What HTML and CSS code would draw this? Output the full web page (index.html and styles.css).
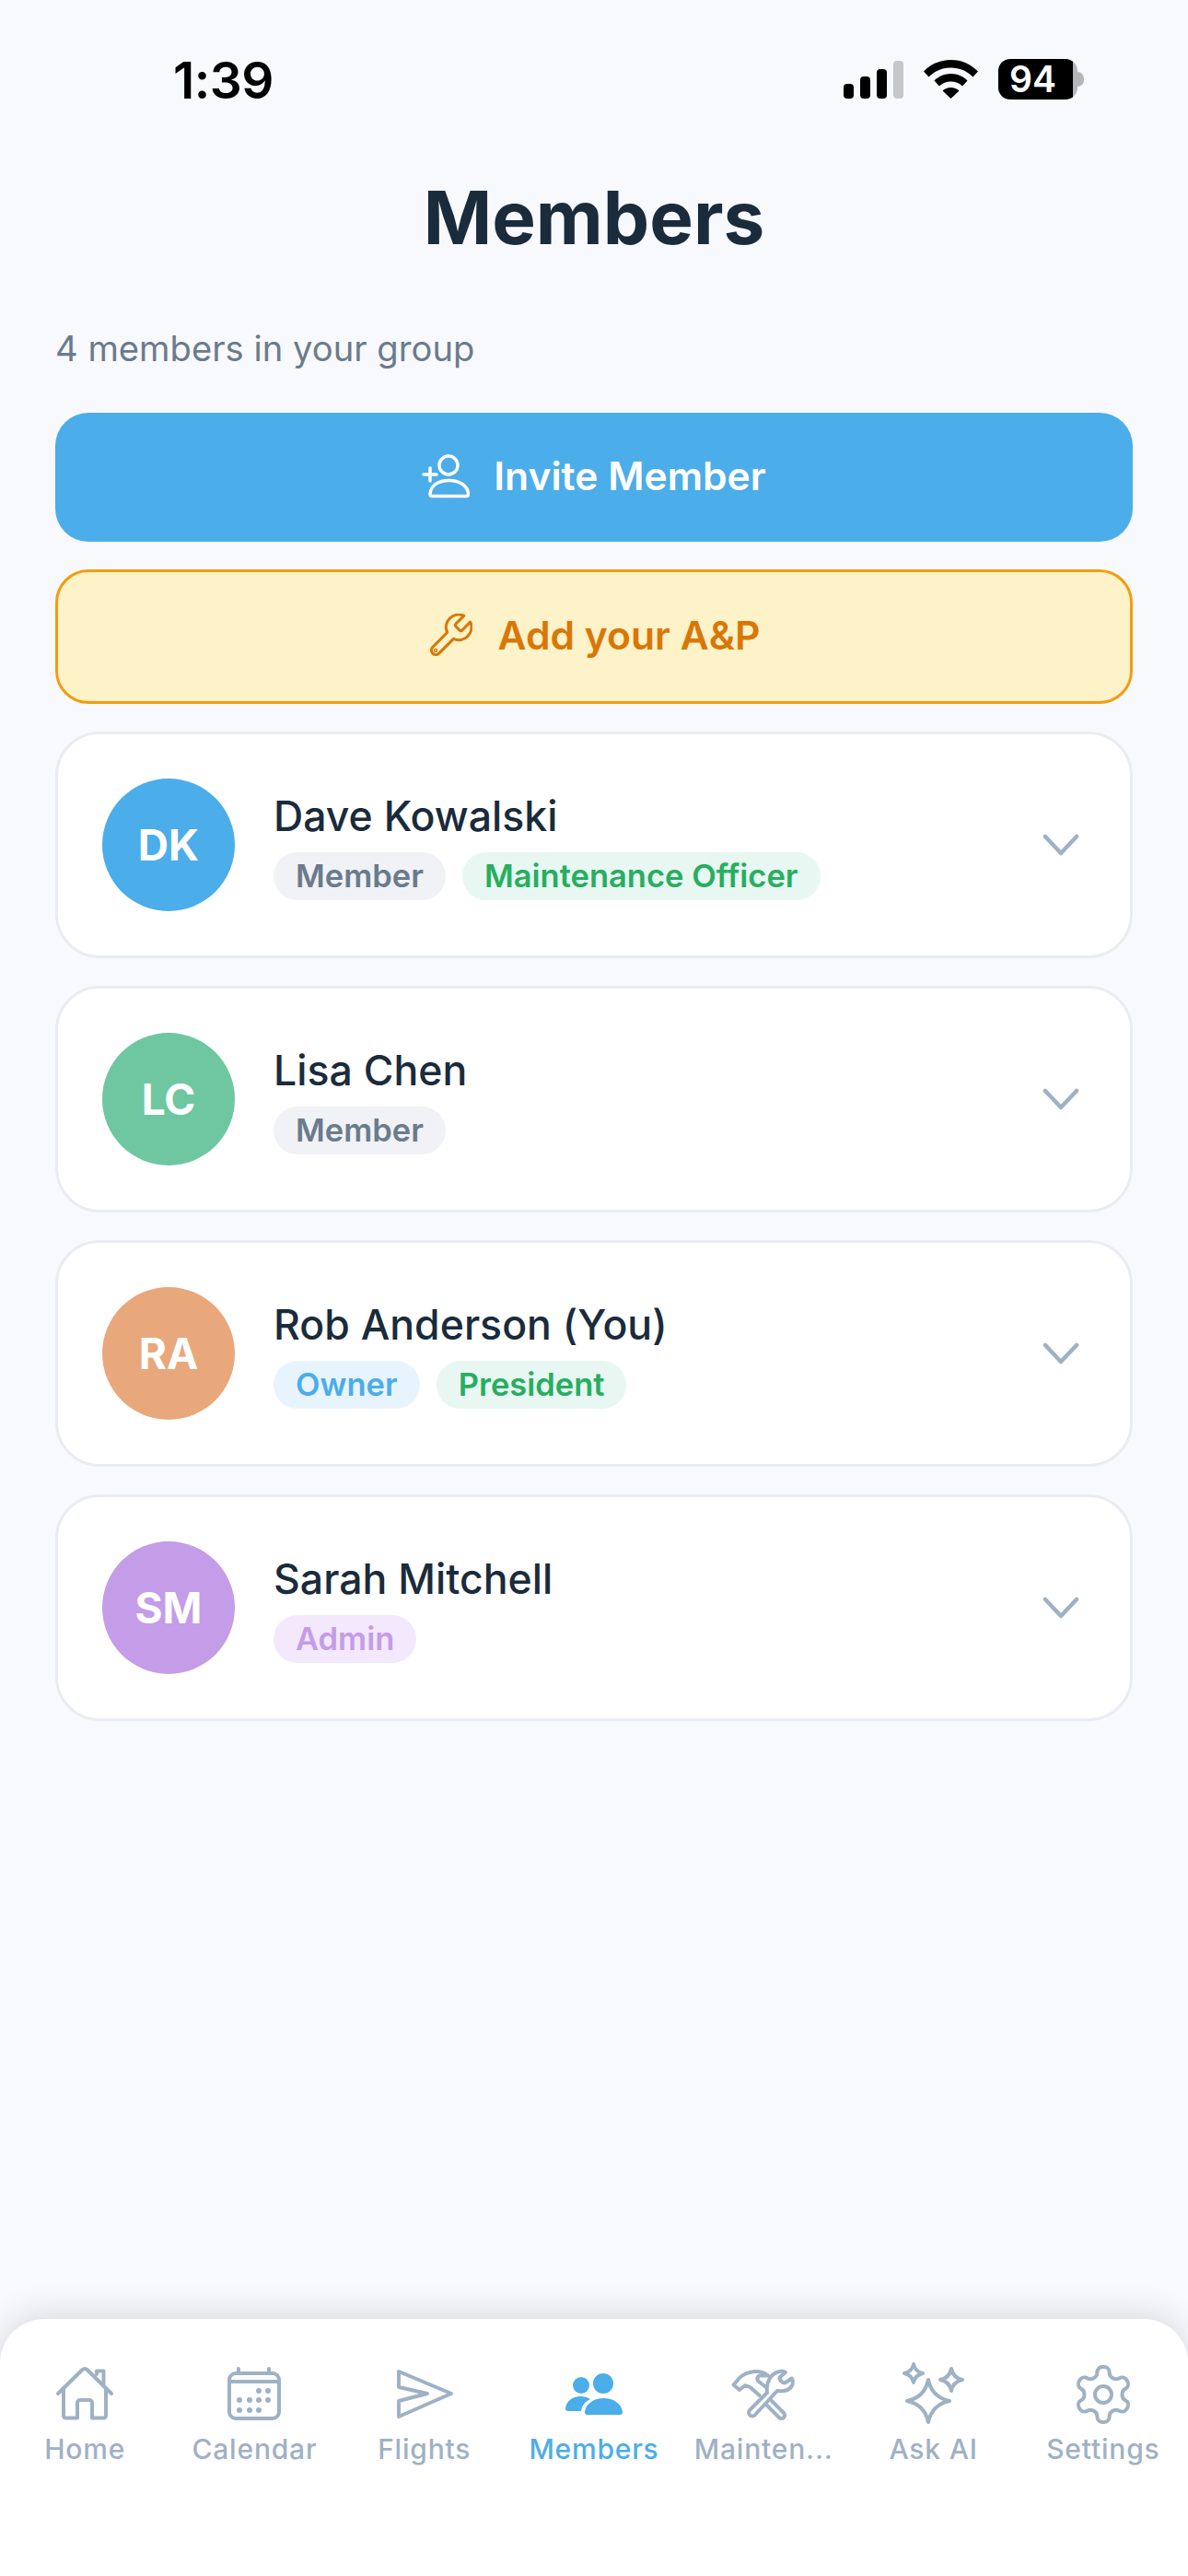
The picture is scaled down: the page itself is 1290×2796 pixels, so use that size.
FILE: index.html
```html
<!DOCTYPE html>
<html lang="en">
<head>
<meta charset="utf-8">
<title>Members</title>
<link rel="stylesheet" href="styles.css">
</head>
<body>
<div class="screen">
  <header class="status">
    <span class="time">1:39</span>
    <div class="status-icons">
      <svg class="signal" width="65" height="41" viewBox="0 0 65 41"><rect x="0" y="25" width="11" height="16" rx="4"/><rect x="18" y="17" width="11" height="24" rx="4"/><rect x="36" y="9" width="11" height="32" rx="4"/><rect class="dim" x="54" y="0" width="11" height="41" rx="4"/></svg>
      <svg class="wifi" width="59" height="42" viewBox="0 0 59 42"><path d="M29.500 0C18 0 8 4.500 0 12.500l5.500 6C12 12 20 8.500 29.500 8.500S47 12 53.500 18.500l5.500-6C51 4.500 41 0 29.500 0z"/><path d="M29.500 15c-7 0-13 2.700-18 7.500l5.500 6c3.300-3.200 7.600-5 12.500-5s9.200 1.800 12.500 5l5.500-6c-5-4.800-11-7.500-18-7.500z"/><path d="M29.500 30c-3.500 0-6.600 1.300-9 3.500L29.500 42l9-8.500c-2.400-2.200-5.500-3.500-9-3.500z"/></svg>
      <div class="battery"><div class="battery-body"><span class="battery-num">94</span></div><span class="battery-nub"></span></div>
    </div>
  </header>

  <main class="content">
    <h1 class="title">Members</h1>
    <p class="subtitle">4 members in your group</p>

    <button class="btn btn-invite">
      <svg width="52" height="50" viewBox="0 0 52 50" fill="none" stroke="#fff" stroke-width="3.500" stroke-linecap="round" stroke-linejoin="round"><circle cx="29" cy="13" r="10"/><path d="M9 44.500C9.500 35 18 29.500 29.500 29.500S50 35 50.500 44.500c0 1-.700 2-2 2H11c-1.300 0-2-1-2-2z"/><path d="M2 23h14M9 16v14"/></svg>
      <span>Invite Member</span>
    </button>

    <button class="btn btn-ap">
      <svg width="48" height="48" viewBox="1.500 1.500 21 21" fill="none" stroke="#D97706" stroke-width="1.350" stroke-linecap="round" stroke-linejoin="round"><path d="M14.700 6.300a1 1 0 0 0 0 1.400l1.600 1.600a1 1 0 0 0 1.400 0l3.770-3.770a6 6 0 0 1-7.940 7.940l-6.910 6.910a2.120 2.120 0 0 1-3-3l6.910-6.910a6 6 0 0 1 7.940-7.940l-3.760 3.760z"/><circle cx="5" cy="19" r=".3"/></svg>
      <span>Add your A&amp;P</span>
    </button>

    <section class="card">
      <div class="avatar av-blue">DK</div>
      <div class="info">
        <div class="name">Dave Kowalski</div>
        <div class="badges"><span class="badge b-grey">Member</span><span class="badge b-green">Maintenance Officer</span></div>
      </div>
      <svg class="chev" width="54" height="24" viewBox="0 0 54 24" fill="none" stroke="#9FB1C5" stroke-width="4.500" stroke-linecap="round" stroke-linejoin="round"><path d="M10 3l17 18 17-18"/></svg>
    </section>

    <section class="card">
      <div class="avatar av-green">LC</div>
      <div class="info">
        <div class="name">Lisa Chen</div>
        <div class="badges"><span class="badge b-grey">Member</span></div>
      </div>
      <svg class="chev" width="54" height="24" viewBox="0 0 54 24" fill="none" stroke="#9FB1C5" stroke-width="4.500" stroke-linecap="round" stroke-linejoin="round"><path d="M10 3l17 18 17-18"/></svg>
    </section>

    <section class="card">
      <div class="avatar av-orange">RA</div>
      <div class="info">
        <div class="name">Rob Anderson (You)</div>
        <div class="badges"><span class="badge b-blue">Owner</span><span class="badge b-green">President</span></div>
      </div>
      <svg class="chev" width="54" height="24" viewBox="0 0 54 24" fill="none" stroke="#9FB1C5" stroke-width="4.500" stroke-linecap="round" stroke-linejoin="round"><path d="M10 3l17 18 17-18"/></svg>
    </section>

    <section class="card">
      <div class="avatar av-purple">SM</div>
      <div class="info">
        <div class="name">Sarah Mitchell</div>
        <div class="badges"><span class="badge b-purple">Admin</span></div>
      </div>
      <svg class="chev" width="54" height="24" viewBox="0 0 54 24" fill="none" stroke="#9FB1C5" stroke-width="4.500" stroke-linecap="round" stroke-linejoin="round"><path d="M10 3l17 18 17-18"/></svg>
    </section>
  </main>

  <nav class="tabbar">
    <div class="tab">
      <svg class="tab-icon" viewBox="0 0 72 72"><path d="M7 35L33.500 9a3.500 3.500 0 0 1 5 0L65 35"/><path d="M49 14v-3.500h7.500V27"/><path d="M13 29v30a2.500 2.500 0 0 0 2.500 2.500H28V45a3 3 0 0 1 3-3h10a3 3 0 0 1 3 3v16.500h12.500A2.500 2.500 0 0 0 59 59V29"/></svg>
      <span class="tab-label">Home</span>
    </div>
    <div class="tab">
      <svg class="tab-icon" viewBox="0 0 72 72"><rect x="9" y="13" width="54" height="49" rx="7"/><path d="M9 22h54M19 8v5M52 8v5"/><g class="dots"><circle cx="41" cy="32" r="3"/><circle cx="51" cy="32" r="3"/><circle cx="20" cy="42" r="3"/><circle cx="31" cy="42" r="3"/><circle cx="41" cy="42" r="3"/><circle cx="51" cy="42" r="3"/><circle cx="20" cy="53" r="3"/><circle cx="31" cy="53" r="3"/><circle cx="41" cy="53" r="3"/></g></svg>
      <span class="tab-label">Calendar</span>
    </div>
    <div class="tab">
      <svg class="tab-icon" viewBox="0 0 72 72"><path d="M8 11L65 35 8 60V43L39 35 8 28z"/></svg>
      <span class="tab-label">Flights</span>
    </div>
    <div class="tab active">
      <svg class="tab-icon filled" viewBox="0 0 72 72"><circle cx="46" cy="24" r="11"/><circle cx="22" cy="26" r="9"/><path d="M26 55C27 46 36 40 46.500 40S66 46 67 55a2.500 2.500 0 0 1-2.500 3H28.500A2.500 2.500 0 0 1 26 55z"/><path d="M5 51C6 43 13 38 21 38c4 0 8 1 11 3-6 3-9 7-10 13H8a3 3 0 0 1-3-3z"/></svg>
      <span class="tab-label">Members</span>
    </div>
    <div class="tab">
      <svg class="tab-icon" viewBox="0 0 72 72"><path d="M40 34C38.600 24 43.200 13 53.500 11c2.400-.500 4.700 0 6.400 1l-6.400 5.500c-.500 2.500 2.400 6 5.800 6l7.500-5c2.800 5.500-.600 11.500-6.300 13-3 1-6.500 1-9.500.500L26.500 58.500a3.900 3.900 0 0 1-5.500-5.500z"/><path d="M31.700 37L21.400 28l-5.200-2-6.300 5-6.400-5.500L11 17c7-6 20.700-9 30-1.500h-8.100c-3.500 0-4.600 4-2.400 6l8.100 6.500"/><path d="M45 43l13 13a3.500 3.500 0 0 1-5 5L40 48"/></svg>
      <span class="tab-label">Mainten...</span>
    </div>
    <div class="tab">
      <svg class="tab-icon" viewBox="0 0 72 72"><path d="M30 20Q34 39 53 43 34 47 30 66 26 47 7 43 26 39 30 20z"/><path d="M14 3Q15.500 11 24 13 15.500 15 14 23 12.500 15 4 13 12.500 11 14 3z"/><path d="M55 8Q57 18 67 20 57 22 55 32 53 22 43 20 53 18 55 8z"/></svg>
      <span class="tab-label">Ask AI</span>
    </div>
    <div class="tab">
      <svg class="tab-icon gear" viewBox="0 0 24 24"><path d="M12.220 2h-.44a2 2 0 0 0-2 2v.18a2 2 0 0 1-1 1.730l-.43.25a2 2 0 0 1-2 0l-.15-.08a2 2 0 0 0-2.730.73l-.22.38a2 2 0 0 0 .73 2.730l.15.1a2 2 0 0 1 1 1.720v.51a2 2 0 0 1-1 1.740l-.15.09a2 2 0 0 0-.73 2.730l.22.38a2 2 0 0 0 2.730.73l.15-.08a2 2 0 0 1 2 0l.43.25a2 2 0 0 1 1 1.730V20a2 2 0 0 0 2 2h.44a2 2 0 0 0 2-2v-.18a2 2 0 0 1 1-1.730l.43-.25a2 2 0 0 1 2 0l.15.08a2 2 0 0 0 2.730-.73l.22-.39a2 2 0 0 0-.73-2.730l-.15-.08a2 2 0 0 1-1-1.740v-.5a2 2 0 0 1 1-1.740l.15-.09a2 2 0 0 0 .73-2.730l-.22-.38a2 2 0 0 0-2.730-.73l-.15.08a2 2 0 0 1-2 0l-.43-.25a2 2 0 0 1-1-1.730V4a2 2 0 0 0-2-2z"/><circle cx="12" cy="12" r="3"/></svg>
      <span class="tab-label">Settings</span>
    </div>
  </nav>
</div>
</body>
</html>
```
FILE: styles.css
```css
* { box-sizing: border-box; }
html, body { margin: 0; padding: 0; }
body { background: #F8F9FD; font-family: "Inter", "Liberation Sans", sans-serif; color: #1A2B3C; }
.screen { width: 1290px; height: 2796px; display: flex; flex-direction: column; overflow: hidden; }

.status { height: 188px; flex: none; display: flex; justify-content: space-between; align-items: flex-start; padding: 56px 113px 0 188px; }
.time { font-size: 55px; font-weight: 600; line-height: 62px; color: #000; letter-spacing: -.5px; }
.status-icons { display: flex; align-items: flex-start; padding-top: 8px; }
.signal { fill: #000; margin-top: 2px; }
.signal .dim { fill: #C5C7C9; }
.wifi { fill: #000; margin-left: 22px; margin-top: 1px; }
.battery { display: flex; align-items: center; margin-left: 22px; height: 44px; }
.battery-body { width: 86px; height: 44px; background: linear-gradient(to right, #000 81px, #B4B6B8 81px); border-radius: 13px; display: flex; align-items: center; padding-left: 12px; }
.battery-num { color: #fff; font-size: 39px; font-weight: 600; line-height: 44px; }
.battery-nub { width: 7px; height: 16px; background: #B4B6B8; border-radius: 0 8px 8px 0; }

.content { flex: 1; padding: 0 60px; display: flex; flex-direction: column; }
.title { margin: 0; text-align: center; font-size: 80px; font-weight: 700; line-height: 96px; color: #1A2B3C; }
.subtitle { margin: 64px 0 40px; font-size: 38.200px; line-height: 60px; color: #6B7B8D; }

.btn { width: 100%; display: flex; align-items: center; justify-content: center; font-family: inherit; font-size: 42.600px; font-weight: 600; border-radius: 36px; padding: 0 0 3px; }
.btn svg { flex: none; }
.btn-invite { height: 140px; background: #4BADE9; color: #fff; border: 0; gap: 26px; margin-bottom: 30px; }
.btn-ap { height: 146px; background: #FDF2C8; color: #D97706; border: 3px solid #F39C12; gap: 28px; margin-bottom: 30px; }

.card { height: 246px; flex: none; background: #fff; border: 3px solid #E9ECF1; border-radius: 48px; padding: 0 48px; display: flex; align-items: center; margin-bottom: 30px; }
.avatar { width: 144px; height: 144px; flex: none; border-radius: 50%; display: flex; align-items: center; justify-content: center; color: #fff; font-size: 46px; font-weight: 700; }
.av-blue { background: #4BADE9; }
.av-green { background: #6FC7A1; }
.av-orange { background: #E8A87C; }
.av-purple { background: #C49CE8; }
.info { flex: 1; margin-left: 42px; display: flex; flex-direction: column; align-items: flex-start; }
.name { font-size: 44.600px; font-weight: 500; line-height: 56px; margin-bottom: 11px; color: #1A2B3C; }
.badges { display: flex; gap: 18px; }
.badge { height: 52px; padding: 0 24px; border-radius: 26px; font-size: 34.500px; font-weight: 600; line-height: 52px; }
.b-grey { background: #F0F2F5; color: #6B7B8D; }
.b-green { background: #E8F7F2; color: #27AE60; }
.b-blue { background: #E8F4FD; color: #4BADE9; }
.b-purple { background: #F3E8FC; color: #C49CE8; }

.tabbar { height: 279px; flex: none; background: #fff; border-radius: 48px 48px 0 0; box-shadow: 0 -6px 36px rgba(0,0,0,.12); display: grid; grid-template-columns: repeat(7, 1fr); padding-top: 46px; align-items: start; }
.tab { display: flex; flex-direction: column; align-items: center; color: #9FB1C5; }
.tab-icon { width: 72px; height: 72px; fill: none; stroke: #9FB1C5; stroke-width: 4; stroke-linecap: round; stroke-linejoin: round; }
.tab-icon.gear { stroke-width: 1.333; }
.tab-icon.filled { fill: #4BADE9; stroke: none; }
.dots { fill: #9FB1C5; stroke: none; }
.tab-label { font-size: 30px; font-weight: 500; line-height: 40px; margin-top: 3px; white-space: nowrap; letter-spacing: .8px; }
.tab.active { color: #4BADE9; }
```
